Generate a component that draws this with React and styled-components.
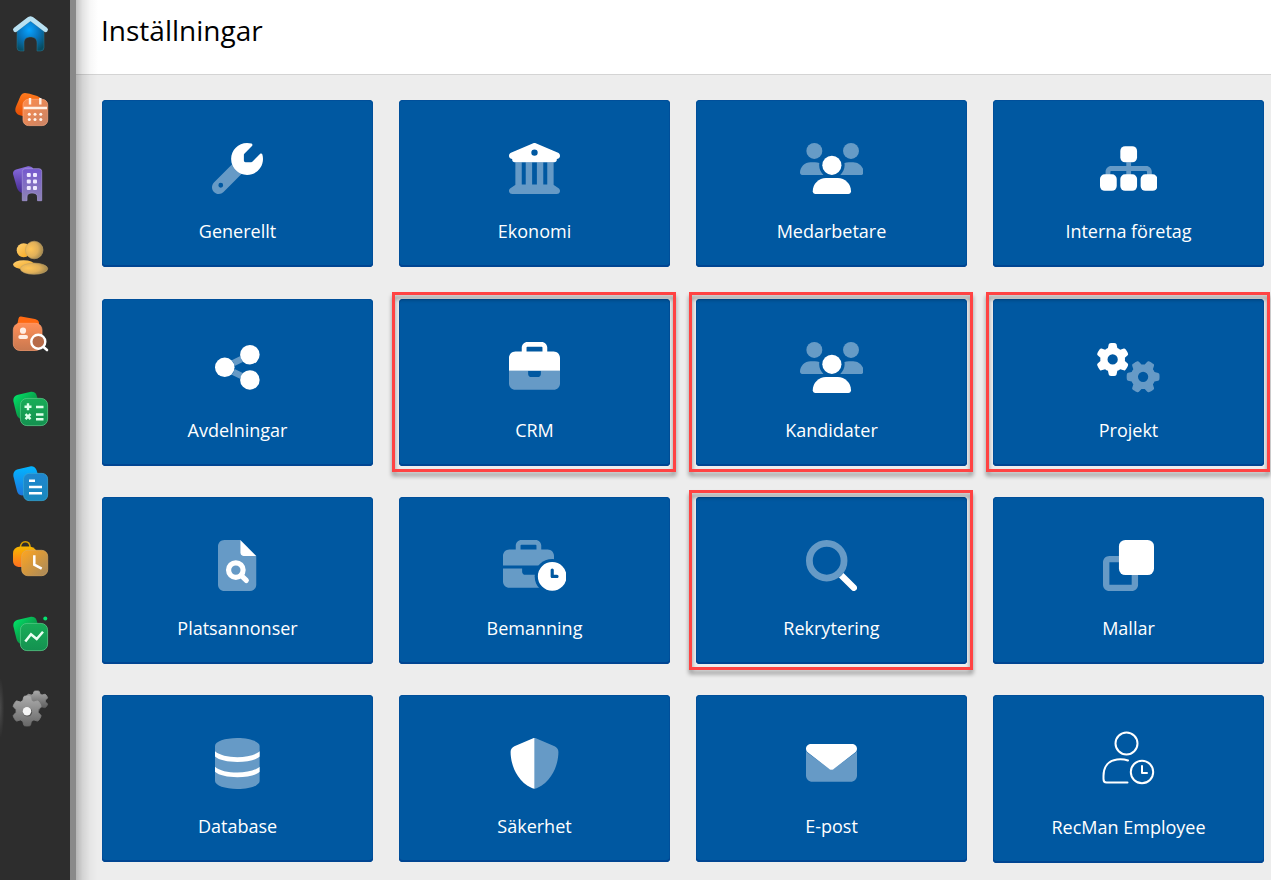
import React from "react";
import styled, { createGlobalStyle } from "styled-components";

const GlobalStyle = createGlobalStyle`
  *, *::before, *::after { box-sizing: border-box; }
  body {
    margin: 0;
    background: #ededed;
    font-family: "Open Sans", "Noto Sans", sans-serif;
  }
`;

const Shell = styled.div`
  display: flex;
  min-height: 100vh;
`;

const Sidebar = styled.nav`
  flex: none;
  width: 76px;
  padding: 16px 0 0 13px;
  background: #2d2d2d;
  border-right: 6px solid #898989;
`;

const NavList = styled.ul`
  display: flex;
  flex-direction: column;
  gap: 40px;
  margin: 0;
  padding: 0;
  list-style: none;
`;

const NavLink = styled.a`
  position: relative;
  display: block;
  width: 35px;
  height: 35px;

  &[aria-current="page"]::before {
    content: "";
    position: absolute;
    left: -13px;
    top: -12px;
    width: 4px;
    height: 58px;
    background: radial-gradient(ellipse at left, #4a4a4a, transparent 75%);
  }

  svg {
    display: block;
    width: 35px;
    height: 35px;
    overflow: visible;
  }
`;

const Main = styled.main`
  position: relative;
  flex: 1;
  min-width: 0;

  &::before {
    content: "";
    position: absolute;
    inset: 0 auto 0 0;
    width: 22px;
    background: linear-gradient(
      to right,
      rgba(0, 0, 0, 0.24),
      rgba(0, 0, 0, 0.11) 30%,
      rgba(0, 0, 0, 0.03) 65%,
      transparent
    );
    pointer-events: none;
  }
`;

const Header = styled.header`
  height: 75px;
  padding: 10px 26px 0 25px;
  background: #fff;
  border-bottom: 1px solid #d4d4d4;
`;

const Title = styled.h1`
  margin: 0;
  font-size: 28px;
  font-weight: 400;
  line-height: 40px;
  color: #000;
`;

const Tiles = styled.div`
  display: grid;
  grid-template-columns: repeat(4, 1fr);
  grid-template-rows: 168px;
  align-items: start;
  gap: 31px 26px;
  padding: 25px 7px 17px 26px;
`;

const Tile = styled.a`
  position: relative;
  display: flex;
  flex-direction: column;
  align-items: center;
  padding-bottom: 24px;
  border-radius: 4px;
  background: #0058a1;
  box-shadow: inset 0 -2px #004592, inset 0 0 0 1px #004f9a;
  color: #fff;
  text-decoration: none;
`;

const TileIcon = styled.span`
  display: flex;
  align-items: flex-end;
  min-height: 94px;
  padding-top: 31px;

  svg {
    display: block;
    height: ${(p) => (p.$tall ? 64 : 51)}px;
    width: auto;
    fill: #fff;
  }
`;

const TileLabel = styled.span`
  margin-top: 25px;
  font-size: 18px;
  line-height: 24px;
`;

const Highlight = styled.span`
  position: absolute;
  inset: -7px -6px -6px -7px;
  border: 3px solid #ff4343;
  filter: drop-shadow(0 4px 2px rgba(0, 0, 0, 0.4));
  pointer-events: none;
`;

const GEAR =
  "M495.9 166.6c3.2 8.7 .5 18.4-6.4 24.6l-43.3 39.4c1.1 8.3 1.7 16.8 1.7 25.4s-.6 17.1-1.7 25.4l43.3 39.4c6.9 6.2 9.6 15.9 6.4 24.6c-4.4 11.9-9.7 23.3-15.8 34.3l-4.7 8.1c-6.6 11-14 21.4-22.1 31.2c-5.9 7.2-15.7 9.6-24.5 6.8l-55.7-17.7c-13.4 10.3-28.2 18.9-44 25.4l-12.5 57.1c-2 9.1-9 16.3-18.2 17.8c-13.8 2.3-28 3.5-42.5 3.5s-28.7-1.2-42.5-3.5c-9.2-1.5-16.2-8.7-18.2-17.8l-12.5-57.1c-15.8-6.5-30.6-15.1-44-25.4L83.1 425.9c-8.8 2.8-18.6 .3-24.5-6.8c-8.1-9.8-15.5-20.2-22.1-31.2l-4.7-8.1c-6.1-11-11.4-22.4-15.8-34.3c-3.2-8.7-.5-18.4 6.4-24.6l43.3-39.4C64.6 273.1 64 264.6 64 256s.6-17.1 1.7-25.4L22.4 191.2c-6.9-6.2-9.6-15.9-6.4-24.6c4.4-11.9 9.7-23.3 15.8-34.3l4.7-8.1c6.6-11 14-21.4 22.1-31.2c5.9-7.2 15.7-9.6 24.5-6.8l55.7 17.7c13.4-10.3 28.2-18.9 44-25.4l12.5-57.1c2-9.1 9-16.3 18.2-17.8C227.3 1.2 241.5 0 256 0s28.7 1.2 42.5 3.5c9.2 1.5 16.2 8.7 18.2 17.8l12.5 57.1c15.8 6.5 30.6 15.1 44 25.4l55.7-17.7c8.8-2.8 18.6-.3 24.5 6.8c8.1 9.8 15.5 20.2 22.1 31.2l4.7 8.1c6.1 11 11.4 22.4 15.8 34.3z";
const GEAR_HOLE = "M256 336a80 80 0 1 0 0-160 80 80 0 1 0 0 160z";

/* ---- Tile icons ---- */

const Duo = ({ w = 512, children }) => (
  <svg viewBox={`0 0 ${w} 512`} aria-hidden="true">
    {children}
  </svg>
);

const Wrench = () => (
  <Duo>
    <path
      opacity=".4"
      fillRule="evenodd"
      d="M200 216L19.9 396.1C7.200 408.800 0 426.100 0 444.100C0 481.600 30.400 512 67.900 512c18 0 35.300-7.200 48-19.900L296 310C250 294 217 262 200 216zM88 400a24 24 0 1 1 0 48 24 24 0 1 1 0-48z"
    />
    <path d="M352 320c88.400 0 160-71.600 160-160c0-15.300-2.200-30.100-6.200-44.200c-3.100-10.800-16.400-13.200-24.300-5.300l-76.800 76.800c-3 3-7.100 4.700-11.300 4.700H336c-8.800 0-16-7.200-16-16V118.600c0-4.200 1.700-8.300 4.700-11.300l76.800-76.800c7.900-7.900 5.400-21.200-5.300-24.300C382.100 2.200 367.300 0 352 0C263.600 0 192 71.600 192 160S263.600 320 352 320z" />
  </Duo>
);

const Columns = () => (
  <Duo>
    <path
      opacity=".4"
      d="M128 192H64V420.300c-.6 .3-1.200 .7-1.800 1.100l-48 32c-11.700 7.800-17 22.400-12.900 35.900S17.900 512 32 512H480c14.100 0 26.500-9.200 30.600-22.700s-1.100-28.100-12.900-35.900l-48-32c-.6-.4-1.200-.7-1.800-1.100V192H384V416H344V192H280V416H232V192H168V416H128V192z"
    />
    <path
      fillRule="evenodd"
      d="M243.400 2.600l-224 96c-14 6-21.800 21-18.700 35.800S16.800 160 32 160v8c0 13.300 10.700 24 24 24H456c13.300 0 24-10.700 24-24v-8c15.200 0 28.300-10.700 31.300-25.600s-4.800-29.900-18.700-35.800l-224-96c-8-3.400-17.200-3.400-25.200 0zM256 64a32 32 0 1 1 0 64 32 32 0 1 1 0-64z"
    />
  </Duo>
);

const Users = () => (
  <Duo w={640}>
    <g opacity=".4">
      <circle cx="144" cy="80" r="80" />
      <circle cx="512" cy="80" r="80" />
      <path d="M0 298.700C0 310.400 9.600 320 21.300 320H235.400c-26.600-23.500-43.300-57.800-43.300-96c0-7.600 .7-15 1.900-22.300c-13.600-6.300-28.700-9.700-44.600-9.700H106.700C47.800 192 0 239.800 0 298.700z" />
      <path d="M404.600 320H618.700c11.800 0 21.300-9.600 21.300-21.300C640 239.800 592.200 192 533.300 192H490.700c-15.900 0-31 3.500-44.600 9.700c1.300 7.200 1.900 14.700 1.900 22.300c0 38.200-16.800 72.500-43.400 96z" />
    </g>
    <circle cx="320" cy="224" r="96" />
    <path d="M261.300 352C187.700 352 128 411.700 128 485.300c0 14.700 11.900 26.700 26.700 26.700H485.300c14.700 0 26.700-11.900 26.700-26.700C512 411.700 452.300 352 378.700 352H261.300z" />
  </Duo>
);

const Sitemap = () => (
  <Duo w={576}>
    <path
      opacity=".4"
      d="M264 192v40H112c-30.900 0-56 25.100-56 56v32h48v-32c0-4.400 3.600-8 8-8H264v40h48V280H464c4.400 0 8 3.600 8 8v32h48V288c0-30.900-25.100-56-56-56H312V192z"
    />
    <rect x="204" y="32" width="168" height="162" rx="48" />
    <rect x="0" y="314" width="168" height="166" rx="48" />
    <rect x="204" y="314" width="168" height="166" rx="48" />
    <rect x="408" y="314" width="168" height="166" rx="48" />
  </Duo>
);

const Share = () => (
  <Duo w={448}>
    <path
      opacity=".4"
      d="M168 184L250 143 279 200 197 241A98 98 0 0 0 168 184zM168 328L250 369 279 312 197 271A98 98 0 0 1 168 328z"
    />
    <circle cx="98" cy="254" r="98" />
    <circle cx="350" cy="128" r="98" />
    <circle cx="350" cy="381" r="98" />
  </Duo>
);

const Briefcase = () => (
  <Duo>
    <path
      opacity=".4"
      d="M0 288V416c0 35.300 28.700 64 64 64H448c35.300 0 64-28.700 64-64V288H320v32c0 17.700-14.300 32-32 32H224c-17.700 0-32-14.300-32-32V288H0z"
    />
    <path d="M184 48H328c4.400 0 8 3.600 8 8V96H176V56c0-4.400 3.600-8 8-8zm-56 8V96H64C28.700 96 0 124.700 0 160V288H512V160c0-35.300-28.700-64-64-64H384V56c0-30.900-25.100-56-56-56H184c-30.900 0-56 25.100-56 56z" />
  </Duo>
);

const Gears = () => (
  <Duo w={640}>
    <path
      fillRule="evenodd"
      transform="translate(-8 10) scale(.645)"
      d={GEAR + GEAR_HOLE}
    />
    <path
      opacity=".4"
      fillRule="evenodd"
      transform="translate(628 184) rotate(90) scale(.645)"
      d={GEAR + GEAR_HOLE}
    />
  </Duo>
);

const FileSearch = () => (
  <Duo w={384}>
    <path
      opacity=".4"
      d="M0 64C0 28.700 28.700 0 64 0H224V128c0 17.700 14.300 32 32 32H384V448c0 35.300-28.700 64-64 64H64c-35.300 0-64-28.700-64-64V64z"
    />
    <path d="M384 160L224 0V128c0 17.700 14.300 32 32 32z" />
    <circle cx="179" cy="302" r="73" fill="none" stroke="#fff" strokeWidth="52" />
    <path d="M232 356L284 406" stroke="#fff" strokeWidth="52" strokeLinecap="round" />
  </Duo>
);

const BriefcaseClock = () => (
  <Duo w={640}>
    <mask id="clock-gap">
      <rect width="640" height="512" fill="#fff" />
      <circle cx="494" cy="366" r="176" fill="#000" />
    </mask>
    <g opacity=".4" mask="url(#clock-gap)">
      <path d="M184 48H328c4.400 0 8 3.600 8 8V96H176V56c0-4.400 3.600-8 8-8zm-56 8V96H64C28.700 96 0 124.700 0 160V256H512V160c0-35.300-28.700-64-64-64H384V56c0-30.900-25.100-56-56-56H184c-30.900 0-56 25.100-56 56z" />
      <path d="M0 286V416c0 35.300 28.700 64 64 64H448V350H224c-17.700 0-32-14.300-32-32V286H0z" />
    </g>
    <path
      fillRule="evenodd"
      d="M494 222a144 144 0 1 1 0 288 144 144 0 1 1 0-288zM494 286c-8.800 0-16 7.200-16 16v64c0 8.800 7.200 16 16 16h48c8.800 0 16-7.200 16-16s-7.200-16-16-16H510V302c0-8.800-7.200-16-16-16z"
    />
  </Duo>
);

const Magnifier = () => (
  <Duo>
    <circle opacity=".4" cx="208" cy="208" r="174" fill="none" stroke="#fff" strokeWidth="68" />
    <path d="M330.700 376c17-12.300 33-28.300 45.300-45.300L502.600 457.400a32 32 0 1 1-45.300 45.300z" />
  </Duo>
);

const Clone = () => (
  <Duo>
    <path
      opacity=".4"
      d="M64 160h96v64H64V448H288V352h64v96c0 35.300-28.700 64-64 64H64c-35.300 0-64-28.700-64-64V224c0-35.300 28.700-64 64-64z"
    />
    <rect x="160" width="352" height="352" rx="64" />
  </Duo>
);

const Database = () => (
  <Duo w={448}>
    <path
      opacity=".4"
      d="M0 80C0 36 100 0 224 0S448 36 448 80V432c0 44-100 80-224 80S0 476 0 432z"
    />
    <path d="M0 134C44 174 130 192 224 192S404 174 448 134V186C408 224 320 240 224 240S40 224 0 186z" />
    <path d="M0 288C44 328 130 346 224 346S404 328 448 288V340C408 378 320 394 224 394S40 378 0 340z" />
  </Duo>
);

const Shield = () => (
  <Duo>
    <path d="M256 0c-4.700 0-9.200 1-13.400 2.900L54.300 82.800c-22 9.300-38.400 31-38.300 57.200c.5 99.200 41.300 280.700 213.600 363.200c8.400 4 17.400 6 26.400 6z" />
    <path
      opacity=".4"
      d="M256 0c4.700 0 9.200 1 13.400 2.900L457.700 82.800c22 9.300 38.400 31 38.300 57.200c-.5 99.200-41.300 280.700-213.600 363.200c-8.400 4-17.400 6-26.400 6z"
    />
  </Duo>
);

const Envelope = () => (
  <Duo>
    <path
      opacity=".4"
      d="M0 128V376c0 35.300 28.700 64 64 64H448c35.300 0 64-28.700 64-64V128c-4 9-10 17-18.800 22.400L280 309c-14 11-34 11-48 0L18.800 150.400C10 145 4 137 0 128z"
    />
    <path d="M0 108c0-26.500 21.500-48 48-48H464c26.500 0 48 21.500 48 48 0 15.100-7.100 29.300-19.200 38.400L275.200 313.600c-11.400 8.500-27 8.500-38.400 0L19.200 146.400C7.100 137.300 0 123.100 0 108z" />
  </Duo>
);

const UserClock = () => (
  <svg viewBox="0 -5 54 64" aria-hidden="true">
    <g fill="none" stroke="#fff" strokeWidth="2" strokeLinecap="round" strokeLinejoin="round">
      <circle cx="24.500" cy="12.500" r="11" />
      <path d="M26 29.500C23 28.500 19 28 15 28.500 6 29.500 1.500 36 1.500 45V48C1.500 50 2.500 51.500 4.500 51.500H25.500" />
      <circle cx="40" cy="41" r="11.200" />
      <path d="M40 35V42H45" />
    </g>
  </svg>
);

/* ---- Sidebar icons ---- */

const Grad = ({ id, from, to, diagonal }) => (
  <linearGradient id={id} x1="0" y1="0" x2={diagonal ? 1 : 0} y2="1">
    <stop stopColor={from} />
    <stop offset="1" stopColor={to} />
  </linearGradient>
);

const NavSvg = ({ children }) => (
  <svg viewBox="0 0 35 35" aria-hidden="true">
    {children}
  </svg>
);

const Home = () => (
  <NavSvg>
    <radialGradient id="home" cx=".45" cy=".3" r=".75">
      <stop stopColor="#08a4ff" />
      <stop offset=".45" stopColor="#0878c4" />
      <stop offset="1" stopColor="#074c61" />
    </radialGradient>
    <path
      d="M17.500 5L31 15V31.500A3.500 3.500 0 0 1 27.500 35H24V27C24 23 21.500 21 17.500 21S11 23 11 27V35H7.500A3.500 3.500 0 0 1 4 31.500V15z"
      fill="url(#home)"
      stroke="#2c7892"
      strokeWidth=".5"
    />
    <path
      d="M2.500 13.700L15.500 3.700Q17.500 2 19.500 3.700L32.500 13.700"
      fill="none"
      stroke="#b8e1f2"
      strokeWidth="4.800"
      strokeLinecap="round"
    />
  </NavSvg>
);

const Calendar = () => (
  <NavSvg>
    <Grad id="cal-back" from="#ff7a1e" to="#e04700" />
    <Grad id="cal-front" from="#ff8b4a" to="#c98467" diagonal />
    <path
      d="M12 2Q9 2 7.500 5L2.800 16C1.500 20 3 22.500 6 24L20 28 28 8 27 6.500Q22 3.500 12 2z"
      fill="url(#cal-back)"
    />
    <rect x="10" y="8.300" width="24.700" height="26.300" rx="5.500" fill="url(#cal-front)" stroke="#ffab80" strokeWidth=".7" />
    <path d="M10.700 17H34M17 7V13.500M27.300 7V13.500" stroke="#fff0e5" strokeWidth="2.400" />
    <g fill="#fff3eb">
      {[23.300, 28.500].map((y) =>
        [16.300, 22, 27.800].map((x) => <circle key={`${x}-${y}`} cx={x} cy={y} r="1.500" />)
      )}
    </g>
  </NavSvg>
);

const Building = () => (
  <NavSvg>
    <Grad id="bld-back" from="#8a6de0" to="#452a91" />
    <Grad id="bld-front" from="#7558cf" to="#8e84b5" />
    <path d="M3 3.500L15 .300Q18 0 20 2V27H9Q5.500 26 4 22L0 8Q-.3 4.500 3 3.500z" fill="url(#bld-back)" />
    <path
      d="M12 2.700H26Q28.700 2.700 28.700 5.500V34.700H24.500V31C24.500 28 22 27 19 27S14 28 14 31V34.700H9.300V5.500Q9.300 2.700 12 2.700z"
      fill="url(#bld-front)"
      stroke="#a596db"
      strokeWidth=".7"
    />
    <g fill="#eee8ff">
      {[7, 13.500, 20].map((y) =>
        [13.800, 20].map((x) => <rect key={`${x}-${y}`} x={x} y={y} width="4" height="4" rx="1" />)
      )}
    </g>
  </NavSvg>
);

const People = () => (
  <NavSvg>
    <Grad id="ppl-head" from="#ffd175" to="#f3a51c" diagonal />
    <radialGradient id="ppl-front" cx=".3" cy=".45" r=".75">
      <stop stopColor="#ffc557" />
      <stop offset=".55" stopColor="#e0b05a" />
      <stop offset="1" stopColor="#94804f" />
    </radialGradient>
    <circle cx="10.700" cy="9.300" r="7" fill="url(#ppl-head)" />
    <ellipse cx="10.700" cy="23.600" rx="10.700" ry="4.400" fill="url(#ppl-head)" />
    <g stroke="#c5a363" strokeWidth=".6">
      <circle cx="21.200" cy="9" r="8.800" fill="url(#ppl-front)" />
      <ellipse cx="21" cy="27.700" rx="13.700" ry="5.600" fill="url(#ppl-front)" />
    </g>
  </NavSvg>
);

const CandidateSearch = () => (
  <NavSvg>
    <Grad id="cv-front" from="#ff8f58" to="#c87850" />
    <path d="M8 .500L22 3Q26 4 26 7V12H3.500L5.500 2.500Q6 0 8 .500z" fill="#ff6a13" />
    <rect x=".3" y="7.300" width="28.700" height="27.200" rx="6.500" fill="url(#cv-front)" stroke="#ff9f70" strokeWidth=".7" />
    <circle cx="10" cy="14.700" r="3.100" fill="#ffeee5" />
    <rect x="5.300" y="19" width="9.700" height="4" rx="2" fill="#ffeee5" />
    <circle cx="25.300" cy="25.700" r="7" fill="#b76b49" stroke="#fff" strokeWidth="2.400" />
    <path d="M30.500 31L34 34" stroke="#fff" strokeWidth="2.600" strokeLinecap="round" />
  </NavSvg>
);

const GreenCards = ({ id }) => (
  <>
    <Grad id={`${id}-back`} from="#00ec6c" to="#11602f" diagonal />
    <Grad id={`${id}-front`} from="#18ad58" to="#149150" />
    <path
      d="M4 4L18 .800Q22 .500 23.500 4L26 12 18 28H8Q4.500 27 3.500 23L.300 10Q0 5.500 4 4z"
      fill={`url(#${id}-back)`}
    />
    <rect x="7.400" y="7.400" width="27.200" height="27.200" rx="6.500" fill={`url(#${id}-front)`} stroke="#54c985" strokeWidth=".8" />
  </>
);

const Calculator = () => (
  <NavSvg>
    <GreenCards id="calc" />
    <path
      d="M11.500 15.700H18.500M15 12.200V19.200M23 16H30.500M12.500 23.200L17.500 28.200M17.500 23.200L12.500 28.200M23 23.500H30.500M23 28.300H30.500"
      stroke="#dcffea"
      strokeWidth="2.400"
    />
  </NavSvg>
);

const Documents = () => (
  <NavSvg>
    <Grad id="doc-back" from="#03b5ff" to="#1d76dc" />
    <Grad id="doc-front" from="#1f86cf" to="#1989bd" />
    <path d="M4 3.500L18 .200Q22 0 23.500 4L26 12 18 28 9 29.500Q5 29 4 25L.300 10Q0 5 4 3.500z" fill="url(#doc-back)" />
    <rect x="10.600" y="7.400" width="24" height="27.200" rx="5.500" fill="url(#doc-front)" stroke="#32a5d4" strokeWidth=".8" />
    <path d="M16 14.700H22M16 21H29M16 27.300H29" stroke="#fff" strokeWidth="2.400" />
  </NavSvg>
);

const BagClock = () => (
  <NavSvg>
    <Grad id="bag-back" from="#f7b900" to="#ff6f20" />
    <Grad id="bag-front" from="#ffa51f" to="#a6895e" diagonal />
    <path d="M7.500 6.500C7.500 2.500 9.500 .800 12.300 .800S17 2.500 17 6.500" fill="none" stroke="#d7a000" strokeWidth="1.500" />
    <path d="M7 5.500H17Q24 7 24 13V26H5.500Q0 25 0 20V12.500Q0 6.500 7 5.500z" fill="url(#bag-back)" />
    <rect x="8.700" y="9.300" width="26" height="25.400" rx="6" fill="url(#bag-front)" stroke="#dca95b" strokeWidth=".7" />
    <path d="M21.300 14.300V23.700L28.700 27.700" fill="none" stroke="#fff" strokeWidth="2.500" />
  </NavSvg>
);

const Statistics = () => (
  <NavSvg>
    <GreenCards id="stat" />
    <path d="M12.300 25.500L18 18.200 23.700 23 30 15.700" fill="none" stroke="#eafff2" strokeWidth="2.500" />
    <circle cx="32.300" cy="2.500" r="2" fill="#06e371" />
  </NavSvg>
);

const Settings = () => (
  <NavSvg>
    <Grad id="set-back" from="#a8a8a8" to="#4f4f4f" />
    <Grad id="set-front" from="#ababab" to="#686868" />
    <path d={GEAR} transform="translate(12 0) scale(.0455 .039)" fill="url(#set-back)" stroke="url(#set-back)" strokeWidth="20" />
    <path
      d={GEAR}
      transform="translate(-.6 5) scale(.0575 .0586)"
      fill="url(#set-front)"
      stroke="url(#set-front)"
      strokeWidth="16"
    />
    <circle cx="14.600" cy="21" r="4.600" fill="#555" />
    <circle cx="14" cy="20.300" r="4.200" fill="#f5f5f5" />
  </NavSvg>
);

const NAV = [
  ["Hem", Home],
  ["Kalender", Calendar],
  ["Företag", Building],
  ["Medarbetare", People],
  ["Kandidater", CandidateSearch],
  ["Kalkyl", Calculator],
  ["Dokument", Documents],
  ["Bemanning", BagClock],
  ["Statistik", Statistics],
  ["Inställningar", Settings, true],
];

const TILES = [
  { label: "Generellt", icon: Wrench },
  { label: "Ekonomi", icon: Columns },
  { label: "Medarbetare", icon: Users },
  { label: "Interna företag", icon: Sitemap },
  { label: "Avdelningar", icon: Share },
  { label: "CRM", icon: Briefcase, marked: true },
  { label: "Kandidater", icon: Users, marked: true },
  { label: "Projekt", icon: Gears, marked: true },
  { label: "Platsannonser", icon: FileSearch },
  { label: "Bemanning", icon: BriefcaseClock },
  { label: "Rekrytering", icon: Magnifier, marked: true },
  { label: "Mallar", icon: Clone },
  { label: "Database", icon: Database },
  { label: "Säkerhet", icon: Shield },
  { label: "E-post", icon: Envelope },
  { label: "RecMan Employee", icon: UserClock, tall: true },
];

export default function App() {
  return (
    <>
      <GlobalStyle />
      <Shell>
        <Sidebar aria-label="Huvudmeny">
          <NavList>
            {NAV.map(([name, Icon, current]) => (
              <li key={name}>
                <NavLink href="#" aria-label={name} aria-current={current ? "page" : undefined}>
                  <Icon />
                </NavLink>
              </li>
            ))}
          </NavList>
        </Sidebar>
        <Main>
          <Header>
            <Title>Inställningar</Title>
          </Header>
          <Tiles>
            {TILES.map(({ label, icon: Icon, marked, tall }) => (
              <Tile key={label} href="#">
                <TileIcon $tall={tall}>
                  <Icon />
                </TileIcon>
                <TileLabel>{label}</TileLabel>
                {marked && <Highlight />}
              </Tile>
            ))}
          </Tiles>
        </Main>
      </Shell>
    </>
  );
}
